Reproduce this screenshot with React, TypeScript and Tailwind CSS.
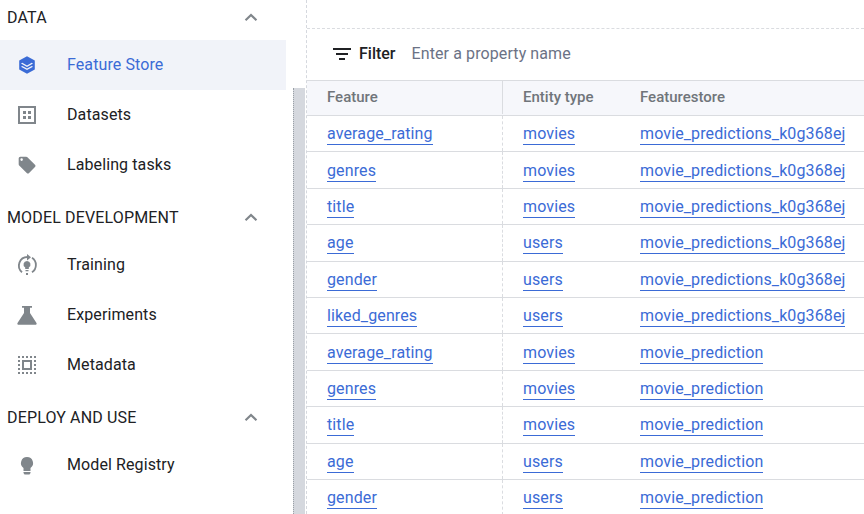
import type { ReactNode } from "react";

const rows = [
  ["average_rating", "movies", "movie_predictions_k0g368ej"],
  ["genres", "movies", "movie_predictions_k0g368ej"],
  ["title", "movies", "movie_predictions_k0g368ej"],
  ["age", "users", "movie_predictions_k0g368ej"],
  ["gender", "users", "movie_predictions_k0g368ej"],
  ["liked_genres", "users", "movie_predictions_k0g368ej"],
  ["average_rating", "movies", "movie_prediction"],
  ["genres", "movies", "movie_prediction"],
  ["title", "movies", "movie_prediction"],
  ["age", "users", "movie_prediction"],
  ["gender", "users", "movie_prediction"],
];

function Icon({ children, color = "#80868b" }: { children: ReactNode; color?: string }) {
  return (
    <svg aria-hidden viewBox="0 0 24 24" className="h-6 w-6 shrink-0" fill={color}>
      {children}
    </svg>
  );
}

function NavItem({ icon, label, active }: { icon: ReactNode; label: string; active?: boolean }) {
  return (
    <div className={`flex h-[50px] items-center pl-[15px] ${active ? "bg-[#f1f3f9] text-[#3b6bd6]" : "text-[#202124]"}`}>
      {icon}
      <span className="ml-[28px] text-[16px] tracking-[0.1px]">{label}</span>
    </div>
  );
}

function Section({ label, className }: { label: string; className: string }) {
  return (
    <div className={`flex items-center justify-between pl-[7px] pr-[23px] text-[16px] tracking-[0.15px] text-[#202124] ${className}`}>
      <span className="pt-[2px]">{label}</span>
      <svg aria-hidden viewBox="0 0 24 24" className="h-6 w-6" fill="#80868b">
        <path d="M12 8.500l-6.200 5.900 1.500 1.500L12 11.400l4.700 4.500 1.500-1.500z" />
      </svg>
    </div>
  );
}

function Link({ children }: { children: string }) {
  return <span className="border-b border-[#3b6bd6] pb-px text-[16px] leading-[19px] tracking-[0.12px] text-[#3b6bd6]">{children}</span>;
}

export default function App() {
  return (
    <div className="flex h-[514px] w-[864px] overflow-hidden bg-white font-['Roboto',sans-serif]">
      <aside className="flex w-[307px] shrink-0 border-r border-dashed border-[#d5d8de]">
        <nav className="w-[286px] shrink-0">
          <Section label="DATA" className="h-[40px] pb-[6px]" />
          <NavItem
            active
            label="Feature Store"
            icon={
              <Icon color="#3b6bd6">
                <path d="M12 3.200l7.800 4.300v8.900L12 20.800l-7.800-4.400V7.500zM7.300 9.800L6 10.500l6 3.400 6-3.400-1.300-.7-4.700 2.600zm0 3.200L6 13.700l6 3.400 6-3.400-1.300-.7-4.700 2.600z" fillRule="evenodd" />
              </Icon>
            }
          />
          <NavItem
            label="Datasets"
            icon={
              <Icon>
                <path d="M3 3h18v18H3zm2 2v14h14V5zm3 3h3v3H8zm5 0h3v3h-3zm-5 5h3v3H8zm5 0h3v3h-3z" fillRule="evenodd" />
              </Icon>
            }
          />
          <NavItem
            label="Labeling tasks"
            icon={
              <Icon>
                <path d="M21.400 11.600l-9-9C12 2.200 11.500 2 11 2H4a2 2 0 0 0-2 2v7c0 .6.200 1.100.6 1.400l9 9c.4.4.9.6 1.400.6s1-.2 1.400-.6l7-7c.4-.4.6-.9.6-1.400s-.2-1-.6-1.400zM5.500 7a1.500 1.500 0 1 1 0-3 1.500 1.500 0 0 1 0 3z" transform="translate(2 2) scale(0.84)" />
              </Icon>
            }
          />
          <Section label="MODEL DEVELOPMENT" className="h-[50px] pt-[4px]" />
          <NavItem
            label="Training"
            icon={
              <Icon>
                <path d="M12 8a3.500 3.500 0 0 0-1.800 6.500V16h3.600v-1.500A3.500 3.500 0 0 0 12 8zm-1.500 9h3v1.300h-3zM11 20h2v2h-2z" />
                <path d="M7 19.200A8.600 8.600 0 0 1 12.500 4M17 4.800a8.600 8.600 0 0 1 0 14.400" fill="none" stroke="#80868b" strokeWidth="1.800" />
                <path d="M12 1l4 3.200L12 7.400z" />
              </Icon>
            }
          />
          <NavItem
            label="Experiments"
            icon={
              <Icon>
                <path d="M7 3h10v1.800h-2v5.200L21.500 20c.5 1-.1 1.800-1.200 1.800H3.700C2.600 21.800 2 21 2.500 20L9 10V4.800H7z" />
              </Icon>
            }
          />
          <NavItem
            label="Metadata"
            icon={
              <Icon>
                <path d="M7 7h10v10H7zm2 2v6h6V9z" fillRule="evenodd" />
                <path d="M3 3h2v2H3zm4 0h2v2H7zm4 0h2v2h-2zm4 0h2v2h-2zm4 0h2v2h-2zM3 7h2v2H3zm16 0h2v2h-2zM3 11h2v2H3zm16 0h2v2h-2zM3 15h2v2H3zm16 0h2v2h-2zM3 19h2v2H3zm4 0h2v2H7zm4 0h2v2h-2zm4 0h2v2h-2zm4 0h2v2h-2z" />
              </Icon>
            }
          />
          <Section label="DEPLOY AND USE" className="h-[50px] pt-[4px]" />
          <NavItem
            label="Model Registry"
            icon={
              <Icon>
                <path d="M12 4a6 6 0 0 0-3.500 10.900V18h7v-3.100A6 6 0 0 0 12 4zM8.500 19h7v1l-1 1.500h-5l-1-1.500z" />
              </Icon>
            }
          />
        </nav>
        <div className="ml-[7px] mt-[88px] h-[426px] w-[12px] border-l border-dotted border-[#9aa0a6] bg-[#d5d8de]" />
      </aside>
      <main className="min-w-0 flex-1">
        <div className="h-[29px] border-b border-dashed border-[#dadce0]" />
        <div className="flex h-[51px] items-center pb-[2px] pl-[26px] text-[16px]">
          <svg aria-hidden viewBox="0 0 18 12" className="h-3 w-[18px]" fill="#202124">
            <path d="M0 0h18v2H0zM3 5h12v2H3zM6 10h6v2H6z" />
          </svg>
          <span className="ml-[8px] font-medium text-[#202124]">Filter</span>
          <span className="ml-[16px] tracking-[0.1px] text-[#6b7285]">Enter a property name</span>
        </div>
        <div className="grid h-[36px] grid-cols-[196px_137px_1fr] items-center border-y border-[#dadce0] bg-[#f6f7fb] pb-px text-[15px] font-medium text-[#70757a]">
          <div className="flex h-full items-center border-r border-[#dadce0] pl-5">Feature</div>
          <div className="pl-5">Entity type</div>
          <div>Featurestore</div>
        </div>
        {rows.map((row, i) => (
          <div key={i} className="grid h-[36.4px] grid-cols-[196px_137px_1fr] items-center border-b border-[#dadce0]">
            <div className="flex h-full items-center border-r border-dashed border-[#dadce0] pl-5 pt-[2px]">
              <Link>{row[0]}</Link>
            </div>
            <div className="flex h-full items-center pl-5 pt-[2px]">
              <Link>{row[1]}</Link>
            </div>
            <div className="flex h-full items-center whitespace-nowrap pt-[2px]">
              <Link>{row[2]}</Link>
            </div>
          </div>
        ))}
      </main>
    </div>
  );
}
